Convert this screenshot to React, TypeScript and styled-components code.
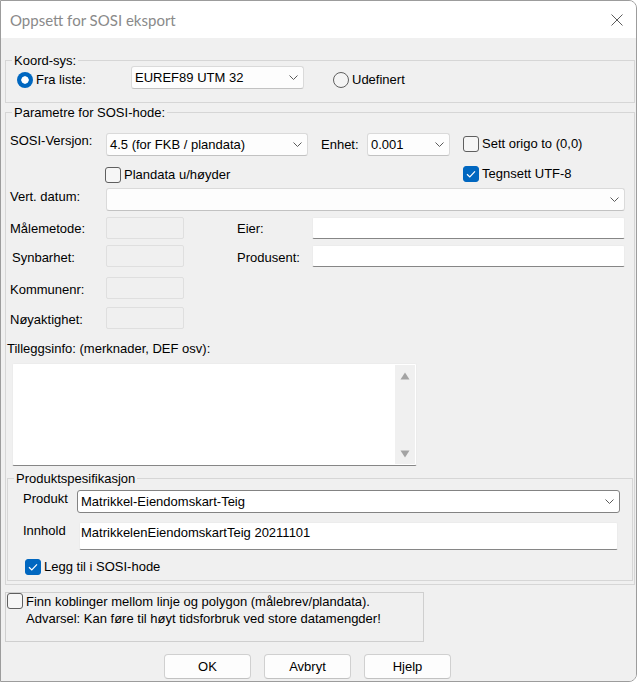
import React from "react";
import styled, { createGlobalStyle } from "styled-components";

const GlobalStyle = createGlobalStyle`
  * { box-sizing: border-box; }
  html, body { margin: 0; padding: 0; background: #ffffff; }
  body {
    font-family: "Liberation Sans", Arial, sans-serif;
    font-size: 13px;
    color: #000000;
  }
`;

type ChevronProps = { color?: string };

function Chevron({ color = "#5a5a5a" }: ChevronProps) {
  return (
    <svg width="9" height="5" viewBox="0 0 9 5">
      <path d="M0.5 0.5 L4.5 4.5 L8.5 0.5" fill="none" stroke={color} strokeWidth="1" />
    </svg>
  );
}

function Check({ label, checked }: { label: string; checked?: boolean }) {
  return (
    <CheckItem>
      <CheckBox $on={checked}>
        {checked && (
          <svg width="10" height="8" viewBox="0 0 10 8">
            <path d="M1 4.3 L3.8 7 L9 1.4" fill="none" stroke="#ffffff" strokeWidth="1.2" />
          </svg>
        )}
      </CheckBox>
      <span>{label}</span>
    </CheckItem>
  );
}

function Radio({ label, on }: { label: string; on?: boolean }) {
  return (
    <RadioItem>
      <RadioDot $on={on} />
      <span>{label}</span>
    </RadioItem>
  );
}

export default function App() {
  return (
    <>
      <GlobalStyle />
      <Window>
        <TitleBar>
          <Title>Oppsett for SOSI eksport</Title>
          <CloseButton>
            <svg width="12" height="12" viewBox="0 0 12 12">
              <path d="M0.5 0.5 L11.5 11.5 M11.5 0.5 L0.5 11.5" stroke="#5c5c5c" strokeWidth="1" />
            </svg>
          </CloseButton>
        </TitleBar>

        <Body>
          <Group $pad="5px 0 13px 11px">
            <Legend>Koord-sys:</Legend>
            <Row>
              <RadioSlot $w={114}>
                <Radio label="Fra liste:" on />
              </RadioSlot>
              <ComboBox $w={173}>
                <span>EUREF89 UTM 32</span>
                <Chevron />
              </ComboBox>
              <Gap $w={29} />
              <RadioSlot>
                <Radio label="Udefinert" />
              </RadioSlot>
            </Row>
          </Group>

          <Group $pad="20px 0 3px 0" $mt={9}>
            <Legend>Parametre for SOSI-hode:</Legend>
            <Rows>
              <Row>
                <FieldLabel $w={100} $indent={4}>SOSI-Versjon:</FieldLabel>
                <ComboBox $w={202}>
                  <span>4.5 (for FKB / plandata)</span>
                  <Chevron />
                </ComboBox>
                <FieldLabel $w={59} $indent={13} $pt={4}>Enhet:</FieldLabel>
                <ComboBox $w={83}>
                  <span>0.001</span>
                  <Chevron />
                </ComboBox>
                <Gap $w={13} />
                <CheckSlot $pt={3}>
                  <Check label="Sett origo to (0,0)" />
                </CheckSlot>
              </Row>

              <Row $mt={11}>
                <Gap $w={99} />
                <CheckSlot $w={358}>
                  <Check label="Plandata u/høyder" />
                </CheckSlot>
                <CheckSlot $mt={-1}>
                  <Check label="Tegnsett UTF-8" checked />
                </CheckSlot>
              </Row>

              <Row $mt={5}>
                <FieldLabel $w={100} $indent={4} $pt={1}>Vert. datum:</FieldLabel>
                <ComboBox>
                  <span />
                  <Chevron />
                </ComboBox>
              </Row>

              <Row $mt={6} $align="center">
                <FieldLabel $w={100} $indent={4} $pt={1}>Målemetode:</FieldLabel>
                <DisabledBox />
                <FieldLabel $w={128} $indent={53} $pt={1}>Eier:</FieldLabel>
                <TextInput />
              </Row>

              <Row $mt={6} $align="center">
                <FieldLabel $w={100} $indent={6} $pt={3}>Synbarhet:</FieldLabel>
                <DisabledBox />
                <FieldLabel $w={128} $indent={53} $pt={3}>Produsent:</FieldLabel>
                <TextInput />
              </Row>

              <Row $mt={10} $align="center">
                <FieldLabel $w={100} $indent={4} $pt={2}>Kommunenr:</FieldLabel>
                <DisabledBox />
              </Row>

              <Row $mt={8} $align="center">
                <FieldLabel $w={100} $indent={4} $pt={2}>Nøyaktighet:</FieldLabel>
                <DisabledBox />
              </Row>

              <FieldLabel $w={300} $indent={1} $mt={12}>Tilleggsinfo: (merknader, DEF osv):</FieldLabel>
              <TextArea>
                <ScrollBar>
                  <svg width="10" height="8" viewBox="0 0 10 8">
                    <path d="M5 0.5 L9.5 7.5 L0.5 7.5 Z" fill="#a3a3a3" />
                  </svg>
                  <svg width="10" height="8" viewBox="0 0 10 8">
                    <path d="M0.5 0.5 L9.5 0.5 L5 7.5 Z" fill="#a3a3a3" />
                  </svg>
                </ScrollBar>
              </TextArea>
            </Rows>

            <Group $pad="11px 12px 5px 15px" $mt={12} $mx={1}>
              <Legend>Produktspesifikasjon</Legend>
              <Row>
                <FieldLabel $w={54} $pt={1}>Produkt</FieldLabel>
                <ComboBox $dark>
                  <span>Matrikkel-Eiendomskart-Teig</span>
                  <Chevron />
                </ComboBox>
              </Row>
              <Row $mt={9}>
                <FieldLabel $w={55} $pt={1}>Innhold</FieldLabel>
                <ValueInput>MatrikkelenEiendomskartTeig 20211101</ValueInput>
              </Row>
              <CheckSlot $mt={9} $ml={2}>
                <Check label="Legg til i SOSI-hode" checked />
              </CheckSlot>
            </Group>
          </Group>

          <WarningBox>
            <CheckBox />
            <WarningText>
              Finn koblinger mellom linje og polygon (målebrev/plandata).
              <br />
              Advarsel: Kan føre til høyt tidsforbruk ved store datamengder!
            </WarningText>
          </WarningBox>

          <ButtonRow>
            <Button>OK</Button>
            <Button>Avbryt</Button>
            <Button>Hjelp</Button>
          </ButtonRow>
        </Body>
      </Window>
    </>
  );
}

const Window = styled.div`
  width: 637px;
  height: 682px;
  display: flex;
  flex-direction: column;
  border: 1px solid #9c9c9c;
  border-radius: 0 8px 8px 0;
  overflow: hidden;
  background: #f0f0f0;
`;

const TitleBar = styled.div`
  height: 37px;
  flex-shrink: 0;
  display: flex;
  align-items: center;
  justify-content: space-between;
  padding: 0 13px 0 9px;
  background: #ffffff;
`;

const Title = styled.div`
  font-family: Lato, "Liberation Sans", sans-serif;
  font-size: 15px;
  color: #8a8a8a;
  padding-top: 1px;
`;

const CloseButton = styled.div`
  display: flex;
  width: 12px;
  height: 12px;
`;

const Body = styled.div`
  flex: 1;
  display: flex;
  flex-direction: column;
  padding: 22px 1px 0 4px;
  background: #f0f0f0;
`;

const Group = styled.div<{ $pad: string; $mt?: number; $mx?: number }>`
  position: relative;
  border: 1px solid #d6d6d6;
  padding: ${(p) => p.$pad};
  margin: ${(p) => p.$mt ?? 0}px ${(p) => p.$mx ?? 0}px 0;
`;

const Legend = styled.span`
  position: absolute;
  top: -8px;
  left: 6px;
  padding: 0 2px;
  line-height: 15px;
  background: #f0f0f0;
`;

const Rows = styled.div`
  display: flex;
  flex-direction: column;
  padding-right: 9px;
`;

const Row = styled.div<{ $mt?: number; $align?: string }>`
  display: flex;
  align-items: ${(p) => p.$align ?? "flex-start"};
  margin-top: ${(p) => p.$mt ?? 0}px;
`;

const Gap = styled.div<{ $w: number }>`
  width: ${(p) => p.$w}px;
  flex-shrink: 0;
`;

const RadioSlot = styled.div<{ $w?: number }>`
  ${(p) => (p.$w ? `width: ${p.$w}px;` : "")}
  flex-shrink: 0;
  display: flex;
  padding-top: 6px;
`;

const RadioItem = styled.label`
  display: flex;
  align-items: center;
  gap: 3px;
  line-height: 16px;
`;

const RadioDot = styled.span<{ $on?: boolean }>`
  width: 16px;
  height: 16px;
  border-radius: 50%;
  flex-shrink: 0;
  ${(p) =>
    p.$on
      ? "background: radial-gradient(circle, #ffffff 0 3.4px, #0067c0 4px);"
      : "background: #f4f4f4; border: 1px solid #5f5f5f;"}
`;

const FieldLabel = styled.div<{ $w: number; $indent?: number; $pt?: number; $mt?: number }>`
  width: ${(p) => p.$w}px;
  flex-shrink: 0;
  padding-left: ${(p) => p.$indent ?? 0}px;
  padding-top: ${(p) => p.$pt ?? 0}px;
  margin-top: ${(p) => p.$mt ?? 0}px;
  line-height: 15px;
  white-space: nowrap;
`;

const ComboBox = styled.div<{ $w?: number; $dark?: boolean }>`
  ${(p) => (p.$w ? `width: ${p.$w}px; flex-shrink: 0;` : "flex: 1;")}
  height: 23px;
  display: flex;
  align-items: center;
  justify-content: space-between;
  padding: 0 5px 0 3px;
  background: ${(p) => (p.$dark ? "#ffffff" : "#fdfdfd")};
  border: 1px solid ${(p) => (p.$dark ? "#838383" : "#dadada")};
  border-bottom-color: ${(p) => (p.$dark ? "#838383" : "#c2c2c2")};
  border-radius: 3px;
  white-space: nowrap;
`;

const CheckSlot = styled.div<{ $w?: number; $pt?: number; $mt?: number; $ml?: number }>`
  ${(p) => (p.$w ? `width: ${p.$w}px;` : "")}
  flex-shrink: 0;
  display: flex;
  padding-top: ${(p) => p.$pt ?? 0}px;
  margin-top: ${(p) => p.$mt ?? 0}px;
  margin-left: ${(p) => p.$ml ?? 0}px;
`;

const CheckItem = styled.label`
  display: flex;
  align-items: center;
  gap: 3px;
  line-height: 16px;
  white-space: nowrap;
`;

const CheckBox = styled.span<{ $on?: boolean }>`
  width: 16px;
  height: 16px;
  flex-shrink: 0;
  display: flex;
  align-items: center;
  justify-content: center;
  border-radius: 3px;
  border: 1px solid ${(p) => (p.$on ? "#0067c0" : "#5f5f5f")};
  background: ${(p) => (p.$on ? "#0067c0" : "#f6f6f6")};
`;

const DisabledBox = styled.div`
  width: 78px;
  height: 22px;
  flex-shrink: 0;
  background: #f0f0f0;
  border: 1px solid #dfdfdf;
  border-radius: 2px;
`;

const TextInput = styled.div`
  flex: 1;
  height: 22px;
  background: #ffffff;
  border: 1px solid #ececec;
  border-bottom-color: #868686;
  border-radius: 2px;
`;

const ValueInput = styled.div`
  flex: 1;
  height: 28px;
  margin: 0 2px 0 1px;
  padding: 2px 0 0 1px;
  line-height: 15px;
  background: #ffffff;
  border: 1px solid #ececec;
  border-bottom-color: #868686;
  border-radius: 2px;
  white-space: nowrap;
`;

const TextArea = styled.div`
  width: 405px;
  height: 103px;
  margin: 7px 0 0 6px;
  display: flex;
  justify-content: flex-end;
  background: #ffffff;
  border: 1px solid #ececec;
  border-bottom-color: #868686;
  border-radius: 2px;
`;

const ScrollBar = styled.div`
  width: 20px;
  margin: 1px 1px 1px 0;
  display: flex;
  flex-direction: column;
  align-items: center;
  justify-content: space-between;
  padding: 7px 0 6px;
  background: #f0f0f0;
`;

const WarningBox = styled.div`
  width: 419px;
  height: 50px;
  margin-top: 7px;
  display: flex;
  align-items: flex-start;
  gap: 3px;
  padding: 0 0 0 1px;
  border: 1px solid #cfcfcf;
`;

const WarningText = styled.div`
  line-height: 16.5px;
  padding-top: 1px;
  white-space: nowrap;
`;

const ButtonRow = styled.div`
  display: flex;
  gap: 13px;
  margin-top: 12px;
  padding-left: 159px;
`;

const Button = styled.button`
  width: 87px;
  height: 25px;
  font-family: "Liberation Sans", Arial, sans-serif;
  font-size: 13px;
  color: #000000;
  background: #fdfdfd;
  border: 1px solid #d0d0d0;
  border-bottom-color: #c2c2c2;
  border-radius: 4px;
  padding: 0;
`;
